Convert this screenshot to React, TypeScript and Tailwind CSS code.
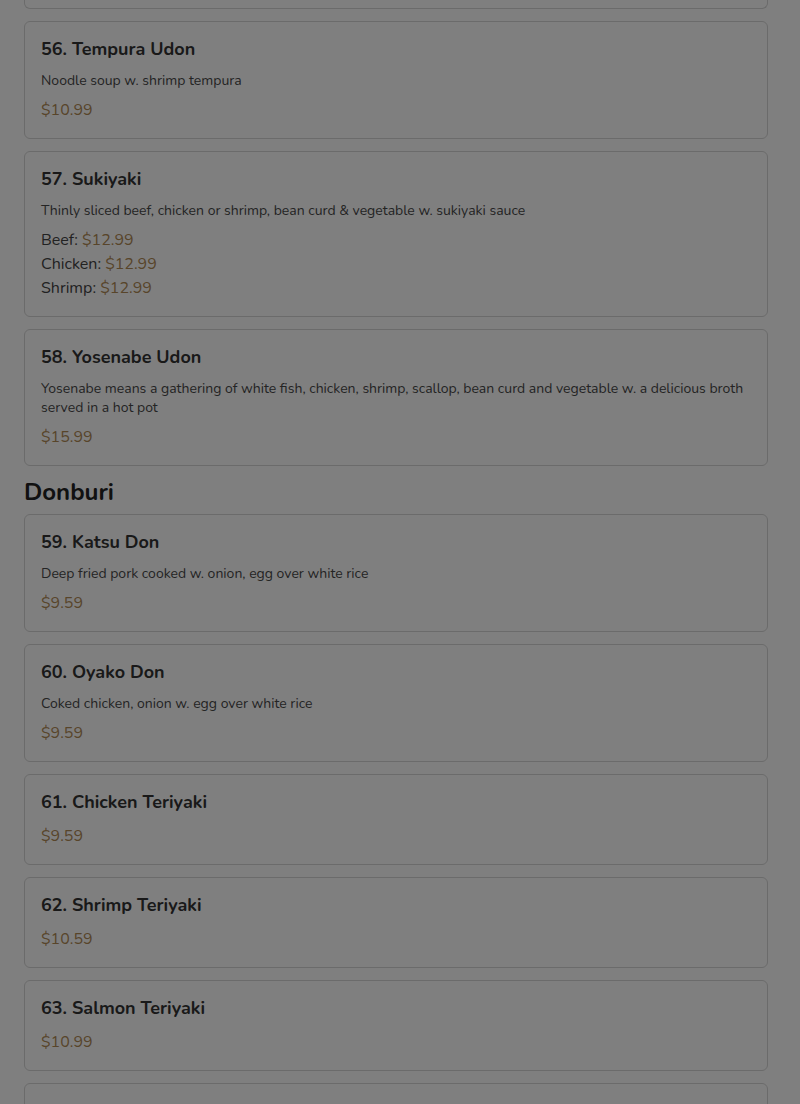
type Item = {
  no: number
  name: string
  desc?: string
  price?: string
  prices?: [string, string][]
}

const udon: Item[] = [
  { no: 56, name: 'Tempura Udon', desc: 'Noodle soup w. shrimp tempura', price: '$10.99' },
  {
    no: 57,
    name: 'Sukiyaki',
    desc: 'Thinly sliced beef, chicken or shrimp, bean curd & vegetable w. sukiyaki sauce',
    prices: [
      ['Beef', '$12.99'],
      ['Chicken', '$12.99'],
      ['Shrimp', '$12.99'],
    ],
  },
  {
    no: 58,
    name: 'Yosenabe Udon',
    desc: 'Yosenabe means a gathering of white fish, chicken, shrimp, scallop, bean curd and vegetable w. a delicious broth served in a hot pot',
    price: '$15.99',
  },
]

const donburi: Item[] = [
  { no: 59, name: 'Katsu Don', desc: 'Deep fried pork cooked w. onion, egg over white rice', price: '$9.59' },
  { no: 60, name: 'Oyako Don', desc: 'Coked chicken, onion w. egg over white rice', price: '$9.59' },
  { no: 61, name: 'Chicken Teriyaki', price: '$9.59' },
  { no: 62, name: 'Shrimp Teriyaki', price: '$10.59' },
  { no: 63, name: 'Salmon Teriyaki', price: '$10.99' },
  { no: 64, name: 'Sesame Chicken', price: '$10.99' },
]

const MenuCard = ({ item }: { item: Item }) => {
  return (
    <div className="mb-3 rounded-md border border-[#d6d6d6] p-4">
      <h5 className="mb-[10px] text-[18px] font-bold leading-[23px] text-[#333]">
        {item.no}. {item.name}
      </h5>
      {item.desc && <p className="mb-2 text-[14px] leading-[19px] text-[#484848]">{item.desc}</p>}
      {item.price && <div className="text-[16px] leading-[24px] text-[#b08a55]">{item.price}</div>}
      {item.prices &&
        item.prices.map(([label, p]) => (
          <div key={label} className="text-[16px] leading-[24px] text-[#444]">
            {label}: <span className="text-[#b08a55]">{p}</span>
          </div>
        ))}
    </div>
  )
}

export default function App() {
  return (
    <div className="relative min-h-screen bg-white font-['Nunito','Lato','Noto_Sans',sans-serif]">
      <div className="pl-6 pr-8">
        {/* tail of the previous card */}
        <div className="mb-3 h-[9px] rounded-b-md border border-t-0 border-[#d6d6d6]" />
        {udon.map((it) => (
          <MenuCard key={it.no} item={it} />
        ))}
        <h4 className="mb-[7px] text-[24px] font-bold leading-[29px] text-[#222]">Donburi</h4>
        {donburi.map((it) => (
          <MenuCard key={it.no} item={it} />
        ))}
      </div>
      {/* modal backdrop */}
      <div className="fixed inset-0 bg-black/50" />
    </div>
  )
}
